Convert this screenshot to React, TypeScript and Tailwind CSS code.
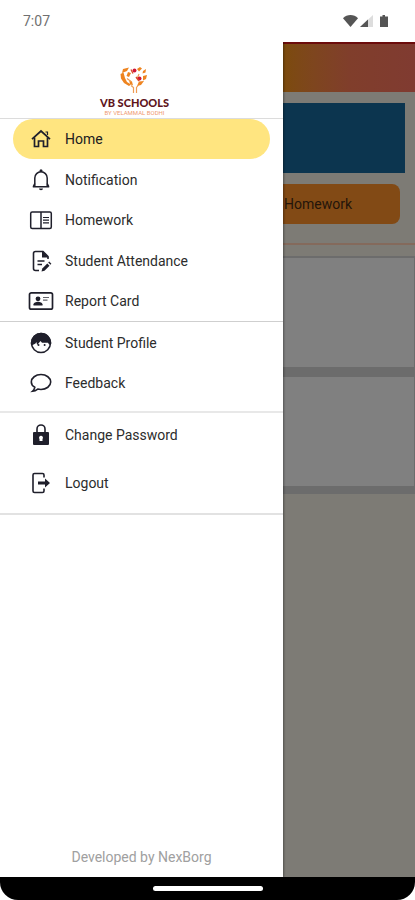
import type { ReactNode } from "react";

type Item = { label: string; icon: ReactNode; active?: boolean };

function HomeIcon() {
  return (
    <svg viewBox="0 0 24 24" className="size-6" fill="none" stroke="currentColor" strokeWidth="1.7">
      <path d="M3 12.2L12 4l9 8.2" />
      <path d="M5.500 10.500v9h4v-5.500h5v5.500h4v-9" />
      <path d="M16.500 5h2v3" strokeWidth="1.2" />
    </svg>
  );
}

function BellIcon() {
  return (
    <svg viewBox="0 0 24 24" className="size-6" fill="none" stroke="currentColor" strokeWidth="1.5">
      <path d="M3.8 18.8h16.4M5.8 18.5V10a6.2 6.2 0 0 1 12.4 0v8.5" />
      <path d="M5.8 15.5l-1.5 3M18.2 15.5l1.5 3" />
      <circle cx="12" cy="2.8" r="1.5" fill="currentColor" stroke="none" />
      <path d="M10 20.5h4a2 1.8 0 0 1-4 0z" fill="currentColor" stroke="none" />
    </svg>
  );
}

function ReaderIcon() {
  return (
    <svg viewBox="0 0 24 24" className="size-6" fill="none" stroke="currentColor">
      <rect x="1.7" y="4" width="20.6" height="16.4" rx="1.5" strokeWidth="1.5" />
      <path d="M12 4v16.4" strokeWidth="1.5" />
      <path d="M14 9.5h6M14 12.2h6M14 14.9h6" strokeWidth="1.2" />
    </svg>
  );
}

function AttendanceIcon() {
  return (
    <svg viewBox="0 0 24 24" className="size-6" fill="none" stroke="currentColor" strokeWidth="1.6">
      <path d="M10 21.5H6.5a2 2 0 0 1-2-2v-15a2 2 0 0 1 2-2H14l5 5v2.5" />
      <path d="M13 1.7v6.8h6.8z" fill="currentColor" stroke="none" />
      <path d="M8.5 12h7M8.5 15.5H13" />
      <path d="M12.5 22.5l.8-3 5-5 2.2 2.2-5 5z" fill="currentColor" stroke="none" />
      <path d="M19.2 13.6l1-1 2.2 2.2-1 1z" fill="currentColor" stroke="none" />
    </svg>
  );
}

function ReportIcon() {
  return (
    <svg viewBox="0 0 26 24" className="h-6 w-[26px]" fill="none" stroke="currentColor">
      <rect x="1.5" y="3.8" width="23" height="16.4" rx="1.8" strokeWidth="1.7" />
      <circle cx="10" cy="9.8" r="2.4" fill="currentColor" stroke="none" />
      <path d="M5.5 16.5v-1.2c0-1.7 2.4-2.6 4.5-2.6s4.5.9 4.5 2.6v1.2z" fill="currentColor" stroke="none" />
      <path d="M15 8.5h6M15 11.2h4.5" strokeWidth="1.2" strokeOpacity="0.7" />
    </svg>
  );
}

function ProfileIcon() {
  return (
    <svg viewBox="0 0 24 24" className="size-6">
      <circle cx="12" cy="12" r="9.5" fill="none" stroke="currentColor" strokeWidth="1.5" />
      <path
        d="M12 1.8A10.2 10.2 0 0 0 1.8 12c0 1 .1 2 .4 2.8L6.500 12.500l.8-1.500.9 3 3.300-4 1.500 1.800h6l1.200 2 2-.8A10.2 10.2 0 0 0 12 1.8z"
        fill="currentColor"
      />
      <circle cx="9.5" cy="14" r="1" fill="currentColor" />
      <circle cx="15.6" cy="14" r="1" fill="currentColor" />
    </svg>
  );
}

function FeedbackIcon() {
  return (
    <svg viewBox="0 0 24 24" className="size-6" fill="none" stroke="currentColor" strokeWidth="1.6">
      <path d="M5.8 16.3C3.500 15 2.300 13 2.300 11c0-4 4.300-7.500 9.700-7.500s9.700 3.500 9.700 7.500-4.300 7.500-9.700 7.500c-1.200 0-2.300-.1-3.300-.4-1.300 1-3.200 2-5.200 2.200 1-.9 1.900-2.100 2.300-4z" />
    </svg>
  );
}

function LockIcon() {
  return (
    <svg viewBox="0 0 24 24" className="size-6">
      <path d="M8 9.5V6a4 4 0 0 1 8 0v3.5" fill="none" stroke="currentColor" strokeWidth="1.6" />
      <path
        fillRule="evenodd"
        d="M5 9h14a1 1 0 0 1 1 1v11a1 1 0 0 1-1 1H5a1 1 0 0 1-1-1V10a1 1 0 0 1 1-1zM12 12.8a2 2 0 0 0-1.5 3.3V18h3v-1.9A2 2 0 0 0 12 12.8z"
        fill="currentColor"
      />
    </svg>
  );
}

function LogoutIcon() {
  return (
    <svg viewBox="0 0 24 24" className="size-6">
      <path
        d="M15 6.5V4a1.5 1.5 0 0 0-1.5-1.5h-8A1.5 1.5 0 0 0 4 4v16a1.5 1.5 0 0 0 1.5 1.5h8A1.5 1.5 0 0 0 15 20v-2.5"
        fill="none"
        stroke="currentColor"
        strokeWidth="1.6"
      />
      <path d="M9 10.5h7v-3l5 4.5-5 4.5v-3H9z" fill="currentColor" />
    </svg>
  );
}

const MAIN: Item[] = [
  { label: "Home", icon: <HomeIcon />, active: true },
  { label: "Notification", icon: <BellIcon /> },
  { label: "Homework", icon: <ReaderIcon /> },
  { label: "Student Attendance", icon: <AttendanceIcon /> },
  { label: "Report Card", icon: <ReportIcon /> },
];

const PROFILE: Item[] = [
  { label: "Student Profile", icon: <ProfileIcon /> },
  { label: "Feedback", icon: <FeedbackIcon /> },
];

const ACCOUNT: Item[] = [
  { label: "Change Password", icon: <LockIcon /> },
  { label: "Logout", icon: <LogoutIcon /> },
];

function NavItem({ label, icon, active }: Item) {
  return (
    <a
      href="#"
      aria-current={active ? "page" : undefined}
      className={
        active
          ? "flex h-10 items-center gap-2.5 rounded-full bg-[#ffe580] pl-3.5 text-sm text-[#202020]"
          : "flex h-10 items-center gap-2.5 rounded-full pl-3.5 text-sm text-[#2c2c2c]"
      }
    >
      <span className="flex w-7 shrink-0 justify-center text-[#1f1f2b]">{icon}</span>
      {label}
    </a>
  );
}

function Logo() {
  return (
    <div className="flex flex-col items-center pt-6">
      <svg viewBox="0 0 30 28" className="h-7 w-8" fill="none">
        <g fill="#ee8420">
          <path d="M4 3l6-1.5L8 5 3 7z" />
          <path d="M1.500 8l3-1.500L6 12l2 4 4 2.500-2 1.500-5-3-3-4.500z" />
          <path d="M9 6l3 1-2 4-2.500-1z" />
          <path d="M18 3l3-2 2 1.500-3 3z" />
          <path d="M24 5l3-2-.5 3.500-3 1z" />
          <path d="M24 10l4-1-1 4-3 1.500z" />
          <path d="M20 15.500l5-.5-3 4-4 1z" />
          <path d="M10 14l3 1.500 1 4-3-1.500z" />
        </g>
        <path d="M12 19.500l2.500 2V27M19.500 19l-2 2.500V27M8 12.500l4 3M20 8l-2 5" stroke="#ee9c55" strokeWidth="1.2" />
        <circle cx="15.5" cy="4.5" r="2" fill="#cf1637" />
        <circle cx="20.5" cy="12.5" r="2" fill="#cf1637" />
        <path d="M12 3.500l2 4M17 11l3 4" stroke="#dc4b2c" strokeWidth="1.4" />
      </svg>
      <p className="mt-0.5 font-[Lato,sans-serif] text-[11px] leading-[14px] font-black text-[#60151c]">VB SCHOOLS</p>
      <p className="text-[6px] leading-[6px] whitespace-nowrap text-[#ef9a72]">BY VELAMMAL BODHI</p>
    </div>
  );
}

function StatusBar() {
  return (
    <header className="relative z-20 flex h-[42px] items-center justify-between bg-white pr-[26px] pl-[23px] text-[#707070]">
      <span className="text-sm">7:07</span>
      <svg viewBox="0 0 46 14" className="h-3.5 w-[46px]" fill="#555">
        <path d="M0 4.200C4-.1 11-.1 15 4.200L7.500 13z" />
        <path d="M30 1v12H17z" fill="#ddd" />
        <path d="M25 5.500V13h-8z" />
        <path d="M37 2.500h2.500V1h2.500v1.500H45V13h-8z" />
      </svg>
    </header>
  );
}

export default function App() {
  return (
    <div className="flex min-h-screen flex-col bg-white font-[Roboto,sans-serif]">
      <StatusBar />

      <div className="grid flex-1 grid-cols-[283fr_132fr]">
        <aside className="z-10 flex min-w-0 flex-col bg-white shadow-[1px_0_2px_rgba(0,0,0,0.35)]">
          <div className="flex h-[77px] justify-center border-b border-[#dcdcdc] pr-3.5">
            <Logo />
          </div>
          <nav className="flex flex-col">
            <div className="flex h-[203px] flex-col justify-between border-b border-[#cfcfcf] px-[13px]">
              {MAIN.map((item) => (
                <NavItem key={item.label} {...item} />
              ))}
            </div>
            <div className="flex flex-col border-b-2 border-[#e8e8e8] px-[13px] pt-px pb-2">
              {PROFILE.map((item) => (
                <NavItem key={item.label} {...item} />
              ))}
            </div>
            <div className="flex flex-col gap-2 border-b-2 border-[#e2e2e2] px-[13px] pt-0.5 pb-2.5">
              {ACCOUNT.map((item) => (
                <NavItem key={item.label} {...item} />
              ))}
            </div>
          </nav>
          <p className="mt-auto pb-2.5 text-center text-sm text-[#a0a0a0]">Developed by NexBorg</p>
        </aside>

        <main className="min-w-0 overflow-hidden bg-[#7d7b75]">
          <div className="h-[50px] border-t-2 border-[#6c0c0c] bg-linear-to-r from-[#7c4b0c] via-[#803e2b] via-50% to-[#803b31]" />
          <div className="mt-[11px] mr-2.5 h-[70px] bg-[#0c354f]" />
          <button
            type="button"
            className="mt-[11px] flex h-10 w-[117px] items-center justify-end rounded-r-lg bg-[#824a15] pr-12 text-sm whitespace-nowrap text-[#24150a]"
          >
            Homework
          </button>
          <div className="mt-[19px] h-0.5 bg-[#846a5c]" />
          <div className="mt-[11px] flex flex-col gap-2.5 border-t-2 border-r border-b-8 border-[#6c6c6c] bg-[#6c6c6c]">
            <div className="h-[109px] bg-[#808080]" />
            <div className="h-[109px] bg-[#808080]" />
          </div>
        </main>
      </div>

      <footer className="flex h-[23px] justify-center rounded-b-[18px] bg-black pt-[9px]">
        <div className="h-[5px] w-[110px] rounded-full bg-white" />
      </footer>
    </div>
  );
}
